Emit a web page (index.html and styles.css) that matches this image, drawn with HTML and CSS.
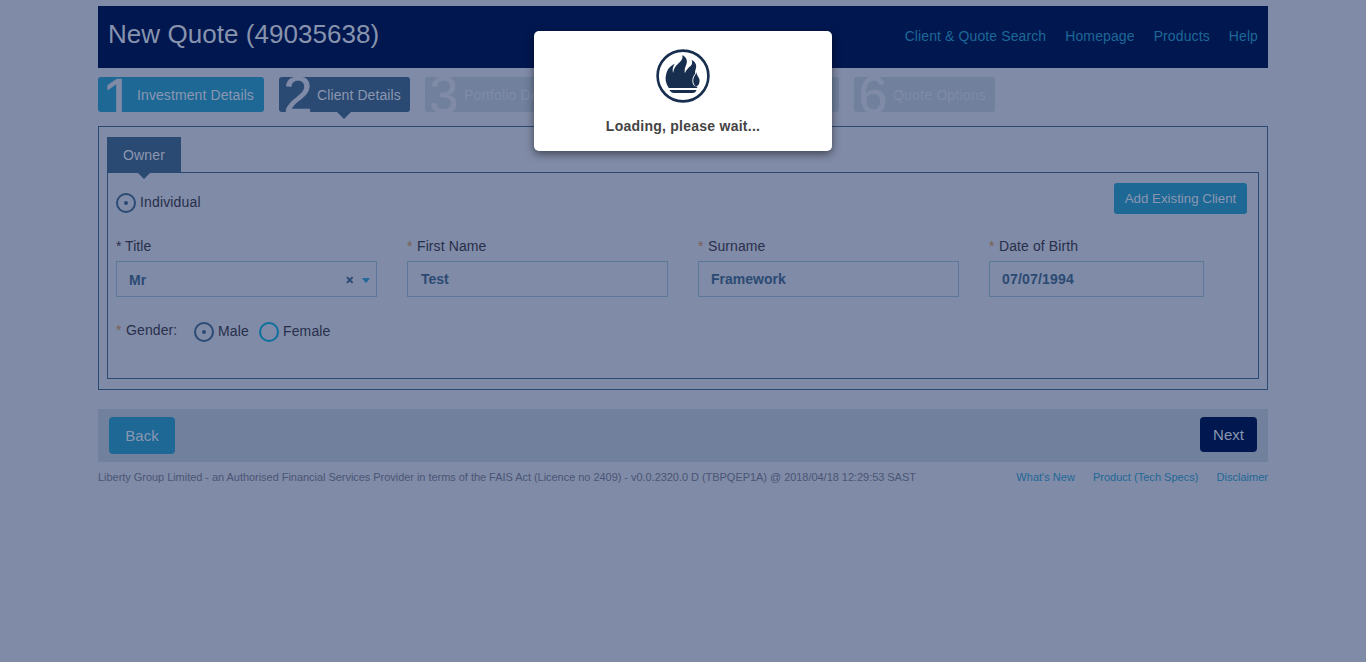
FILE: index.html
```html
<!DOCTYPE html>
<html lang="en">
<head>
<meta charset="utf-8">
<title>New Quote</title>
<link rel="stylesheet" href="styles.css">
</head>
<body>
<div class="page">
  <header class="header">
    <h1 class="title">New Quote (49035638)</h1>
    <nav class="nav"><a>Client &amp; Quote Search</a><a>Homepage</a><a>Products</a><a>Help</a></nav>
  </header>
  <div class="steps">
    <div class="step done"><span class="num one">1</span><span class="label">Investment Details</span></div>
    <div class="step active"><span class="num">2</span><span class="label">Client Details</span></div>
    <div class="step third"><span class="num">3</span><span class="label">Portfolio Details</span></div>
    <div class="step fourth"></div>
    <div class="step fifth"></div>
    <div class="step sixth"><span class="num">6</span><span class="label">Quote Options</span></div>
  </div>
  <main class="panel">
    <div class="tab">Owner</div>
    <section class="inner">
      <div class="top-row">
        <label class="option"><span class="radio on"></span>Individual</label>
        <button class="btn add">Add Existing Client</button>
      </div>
      <div class="fields">
        <div class="field"><div class="caption"><i class="dark">*</i>Title</div>
          <div class="input select"><span>Mr</span>
            <svg class="clear" width="8" height="8" viewBox="0 0 8 8"><path d="M1 1.2L6.600 6.8M6.600 1.2L1 6.8" stroke="#2b4a73" stroke-width="1.9"/></svg>
            <svg class="caret" width="8" height="5" viewBox="0 0 8 5"><path d="M0 0H8L4.700 4.600H3.300Z" fill="#246a9c"/></svg>
          </div></div>
        <div class="field"><div class="caption"><i>*</i>First Name</div><div class="input first">Test</div></div>
        <div class="field"><div class="caption"><i>*</i>Surname</div><div class="input">Framework</div></div>
        <div class="field short"><div class="caption"><i>*</i>Date of Birth</div><div class="input date">07/07/1994</div></div>
      </div>
      <div class="gender">
        <div class="caption gl"><i>*</i>Gender:</div>
        <label class="option male"><span class="radio on"></span>Male</label>
        <label class="option"><span class="radio off"></span>Female</label>
      </div>
    </section>
  </main>
  <div class="actions"><button class="btn back">Back</button><button class="btn next">Next</button></div>
  <footer class="footer">
    <span class="legal">Liberty Group Limited - an Authorised Financial Services Provider in terms of the FAIS Act (Licence no 2409) - v0.0.2320.0 D (TBPQEP1A) @ 2018/04/18 12:29:53 SAST</span>
    <span class="links"><a>What's New</a><a>Product (Tech Specs)</a><a>Disclaimer</a></span>
  </footer>
</div>
<div class="modal">
  <svg class="logo" width="54" height="54" viewBox="0 0 54 54">
    <circle cx="27" cy="27" r="25.4" fill="none" stroke="#172e4e" stroke-width="2.6"/>
    <g fill="#172e4e">
      <path d="M12.800 39C9.600 34.500 8.800 29.500 10.200 25C11.300 20.500 13.500 17.500 18.700 14.700C16.500 18.200 16.200 21.500 17.200 24C17.500 19 20.500 16.200 23.700 13.300C26.200 11 26.700 9 26.500 6C30.500 8.500 31.800 11.500 30.300 15.500C29 18.600 28.300 21 28.900 24.300C30.200 20.500 32.500 18.800 34.600 17C36.300 15.500 36.500 13.500 35.700 10.700C39.500 13 41 16 39.800 19.800C39.200 21.800 38.900 22.800 39.200 24.500C36.800 27.500 35.600 31 36.800 34.500C37.500 36.700 39.500 37.500 41.500 38L41 39Z"/>
      <path d="M40.500 23C40.300 27 44.400 28.500 43.500 33C43.100 35.500 42 37 39.800 37.500C37 35 36.700 31.500 37.800 28.500C38.700 26.200 40 25.200 40.500 23Z"/>
      <path d="M13.500 41H40.500C39.700 43 38.700 44 36.700 44H18C16 44 14.500 43 13.500 41Z"/>
    </g>
  </svg>
  <div class="loading">Loading, please wait...</div>
</div>
</body>
</html>
```
FILE: styles.css
```css
* { box-sizing: border-box; }
body { margin: 0; background: #808ba7; font: 14px/16px "Liberation Sans", Arial, sans-serif; color: #282f4b; height: 662px; overflow: hidden; }
.page { width: 1170px; margin: 0 auto; padding-top: 6px; }
.header { height: 62px; background: #00174f; display: flex; justify-content: space-between; padding: 0 10px; }
.title { margin: 0; font-size: 26px; font-weight: 400; line-height: 56px; color: #8893ad; letter-spacing: 0.05px; }
.nav { display: flex; gap: 19px; line-height: 60px; color: #1d6898; letter-spacing: 0.11px; }
.steps { display: flex; gap: 15px; margin-top: 9px; height: 35px; }
.step { position: relative; display: flex; height: 35px; padding: 0 0 0 4px; border-radius: 3px; background: #70809d; color: #808ba7; white-space: nowrap; }
.done { background: #1e6896; width: 166px; }
.active { background: #2b4a73; width: 131px; }
.active::after { content: ""; position: absolute; top: 35px; left: 58px; border: 7px solid transparent; border-top-color: #2b4a73; border-bottom: 0; }
.third { width: 152px; }
.fourth { width: 120px; }
.fifth { width: 112px; }
.sixth { width: 141px; }
.num { width: 29px; height: 35px; overflow: hidden; font-size: 52px; line-height: 37px; color: #808ba7; -webkit-text-stroke: 0.7px #808ba7; text-indent: 0.5px; }
.one { font-size: 56px; line-height: 41px; }
.label { margin-left: 6px; line-height: 36px; letter-spacing: 0.1px; }
.active .label { margin-left: 5px; }
.sixth .label { letter-spacing: 0.2px; }
.done .label, .active .label { color: #8b97b0; }
.panel { margin-top: 14px; height: 264px; border: 1px solid #2b4a73; padding: 10px 8px; }
.tab { position: relative; width: 74px; height: 35px; background: #2b4a73; color: #8b97b0; text-align: center; line-height: 36px; letter-spacing: 0.15px; }
.tab::after { content: ""; position: absolute; top: 36px; left: 31px; border: 6px solid transparent; border-top-color: #2b4a73; border-bottom: 0; }
.inner { height: 207px; width: 1152px; border: 1px solid #2b4a73; padding: 10px 11px 0 8px; }
.top-row { display: flex; justify-content: space-between; height: 55px; }
.option { display: flex; align-items: center; height: 18px; gap: 4px; margin-top: 10px; letter-spacing: 0.15px; }
.radio { width: 20px; height: 20px; margin-top: 1px; border: 2px solid #2b4a73; border-radius: 50%; display: flex; align-items: center; justify-content: center; }
.on::after { content: ""; width: 4px; height: 4px; border-radius: 50%; background: #2b4a73; }
.off { border-color: #0b709c; }
.btn { border: 0; padding: 0; font: 14px/16px "Liberation Sans", Arial, sans-serif; color: #8b97b0; background: #1e6896; border-radius: 3px; }
.add { width: 133px; height: 31px; font-size: 13.3px; }
.fields { display: flex; gap: 30px; }
.field { width: 261px; }
.short { width: 215px; }
.caption { height: 23px; letter-spacing: 0.1px; }
.caption i { font-style: normal; color: #7a5f50; display: inline-block; width: 10px; font-size: 14px; }
.caption i.dark { color: #282f4b; width: 9px; }
.input { height: 36px; border: 1px solid #5c7898; padding: 0 13px 0 12px; line-height: 35px; font-weight: 700; color: #2b4a73; }
.first { padding-left: 13px; }
.date { letter-spacing: 0.2px; }
.select { display: flex; align-items: center; line-height: 36px; padding-right: 6px; }
.select span { padding-top: 1px; }
.clear { margin-left: auto; margin-top: 1px; }
.caret { margin-left: 8px; margin-top: 3px; }
.gender { display: flex; margin-top: 25px; }
.gl { width: 78px; }
.gender .option { margin-top: 0; }
.male { margin-right: 10px; }
.actions { margin-top: 19px; height: 53px; background: #70809d; display: flex; justify-content: space-between; padding: 8px 11px; }
.back { width: 66px; height: 37px; border-radius: 4px; font-size: 15px; }
.next { width: 57px; height: 35px; border-radius: 4px; font-size: 15px; background: #00174f; }
.footer { display: flex; justify-content: space-between; font-size: 11px; line-height: 14px; margin-top: 8px; color: #4b5575; white-space: nowrap; }
.legal { letter-spacing: -0.04px; }
.links { display: flex; gap: 18px; color: #1e6896; letter-spacing: 0.02px; }
.modal { position: absolute; left: 534px; top: 31px; width: 298px; height: 120px; border-radius: 5px; background: #fff; box-shadow: 0 3px 9px rgba(0,0,0,.5); display: flex; flex-direction: column; align-items: center; padding-top: 18px; }
.loading { margin-top: 15px; font-weight: 700; color: #444; letter-spacing: 0.25px; }
```
